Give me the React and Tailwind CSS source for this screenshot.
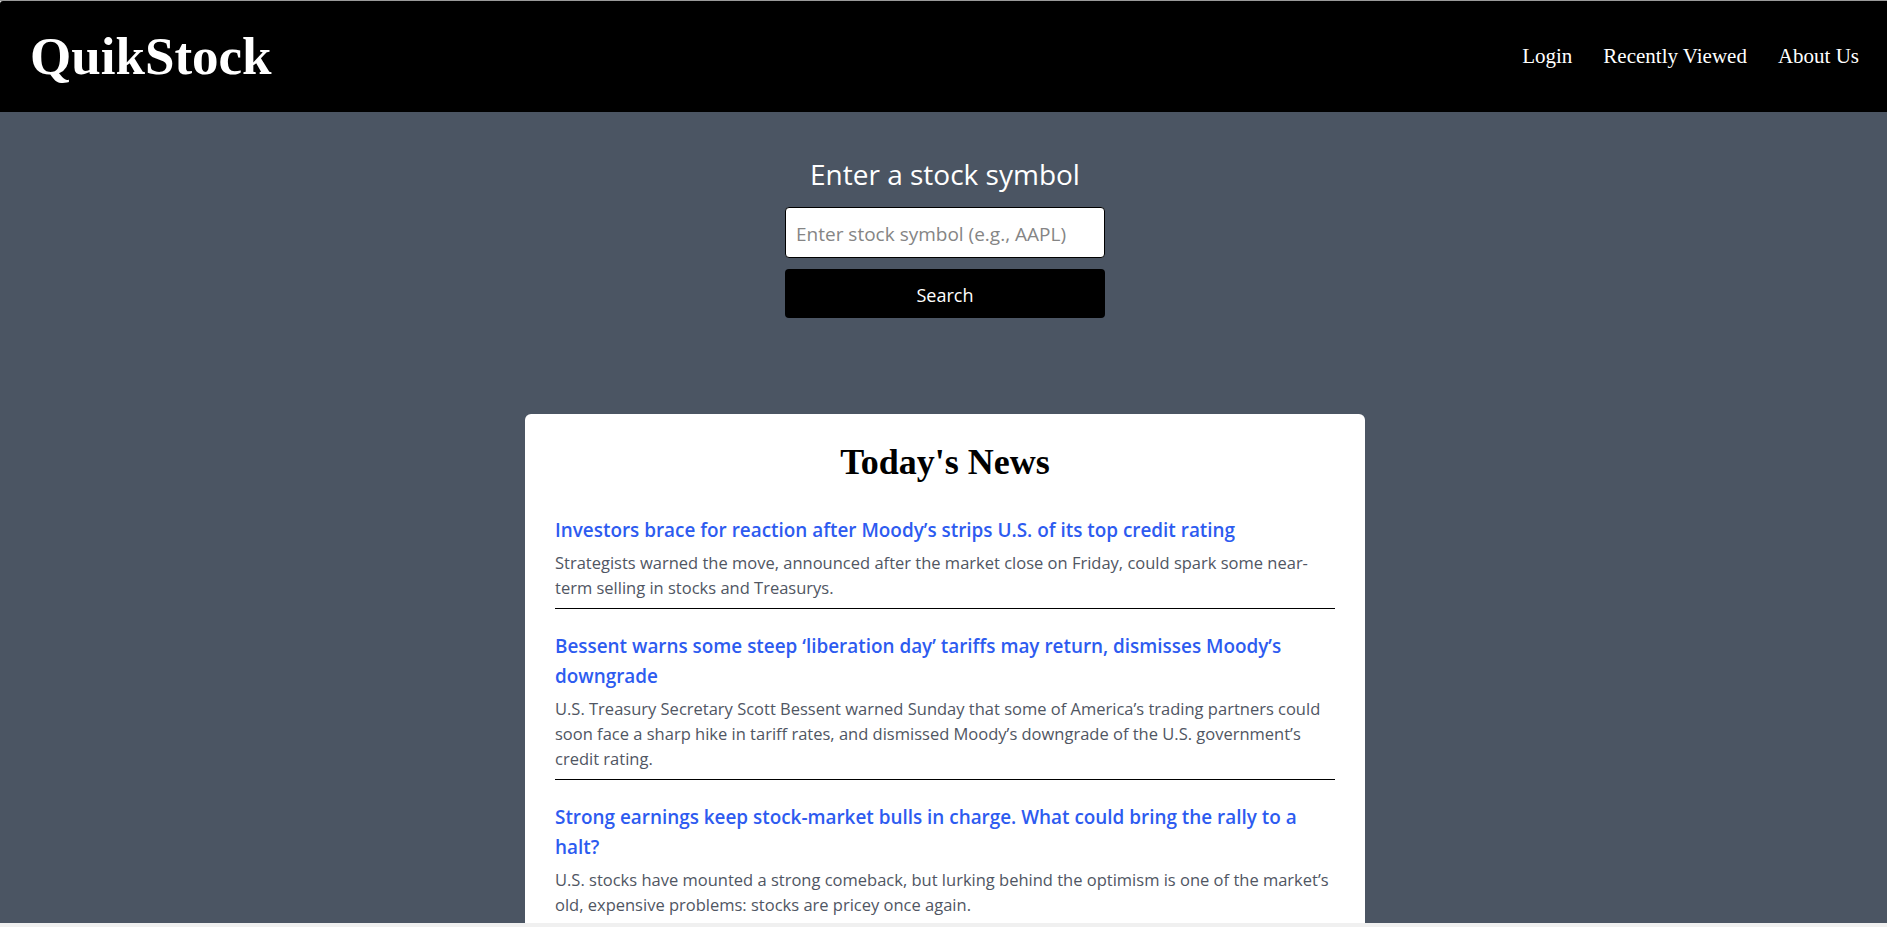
import React from "react";

const serif = { fontFamily: '"Liberation Serif", "Times New Roman", serif' };

const news = [
  {
    title: "Investors brace for reaction after Moody’s strips U.S. of its top credit rating",
    desc: "Strategists warned the move, announced after the market close on Friday, could spark some near-term selling in stocks and Treasurys.",
  },
  {
    title: "Bessent warns some steep ‘liberation day’ tariffs may return, dismisses Moody’s downgrade",
    desc: "U.S. Treasury Secretary Scott Bessent warned Sunday that some of America’s trading partners could soon face a sharp hike in tariff rates, and dismissed Moody’s downgrade of the U.S. government’s credit rating.",
  },
  {
    title: "Strong earnings keep stock-market bulls in charge. What could bring the rally to a halt?",
    desc: "U.S. stocks have mounted a strong comeback, but lurking behind the optimism is one of the market’s old, expensive problems: stocks are pricey once again.",
  },
];

export default function App() {
  return (
    <div
      className="h-[927px] w-full flex flex-col overflow-hidden bg-[#f0f0f0]"
      style={{ fontFamily: '"Open Sans", "Noto Sans", sans-serif' }}
    >
      <div className="h-[1px] bg-[#9a9a9a] shrink-0" />
      <header className="h-[111px] shrink-0 bg-black flex items-center justify-between pl-[30px] pr-[28px] rounded-tl-[3px]">
        <div className="text-white text-[53px] font-bold" style={serif}>
          QuikStock
        </div>
        <nav className="flex items-center gap-[31px] text-white text-[21px]" style={serif}>
          <a href="#">Login</a>
          <a href="#">Recently Viewed</a>
          <a href="#">About Us</a>
        </nav>
      </header>
      <main className="flex-1 min-h-0 overflow-hidden bg-[#4b5563] flex flex-col items-center pl-[3px]">
        <h2 className="shrink-0 mt-[42px] text-white text-[28px] leading-[40px]">Enter a stock symbol</h2>
        <input
          type="text"
          placeholder="Enter stock symbol (e.g., AAPL)"
          className="shrink-0 mt-[13px] h-[51px] w-[320px] bg-white border border-black rounded-[4px] px-[10px] pt-[2px] text-[19px] text-black placeholder:text-[#858585] outline-none"
        />
        <button className="shrink-0 mt-[11px] h-[49px] w-[320px] bg-black text-white text-[18px] rounded-[4px] pt-[3px]">
          Search
        </button>
        <section className="shrink-0 mt-[96px] w-[840px] bg-white rounded-md px-[30px] pt-[30px] pb-[30px]">
          <h1 className="text-center text-black text-[36px] font-bold leading-[36px] mb-[13px]" style={serif}>
            Today's News
          </h1>
          {news.map((n, i) => (
            <article key={i} className="pt-[22px] pb-[8px] border-b border-black">
              <a href="#" className="block text-[#2d5bf0] text-[18.9px] font-semibold leading-[30px]">
                {n.title}
              </a>
              <p className="mt-[5px] text-[#505663] text-[16.5px] leading-[25px]">{n.desc}</p>
            </article>
          ))}
        </section>
      </main>
      <div className="h-[4px] shrink-0 bg-[#f0f0f0]" />
    </div>
  );
}
